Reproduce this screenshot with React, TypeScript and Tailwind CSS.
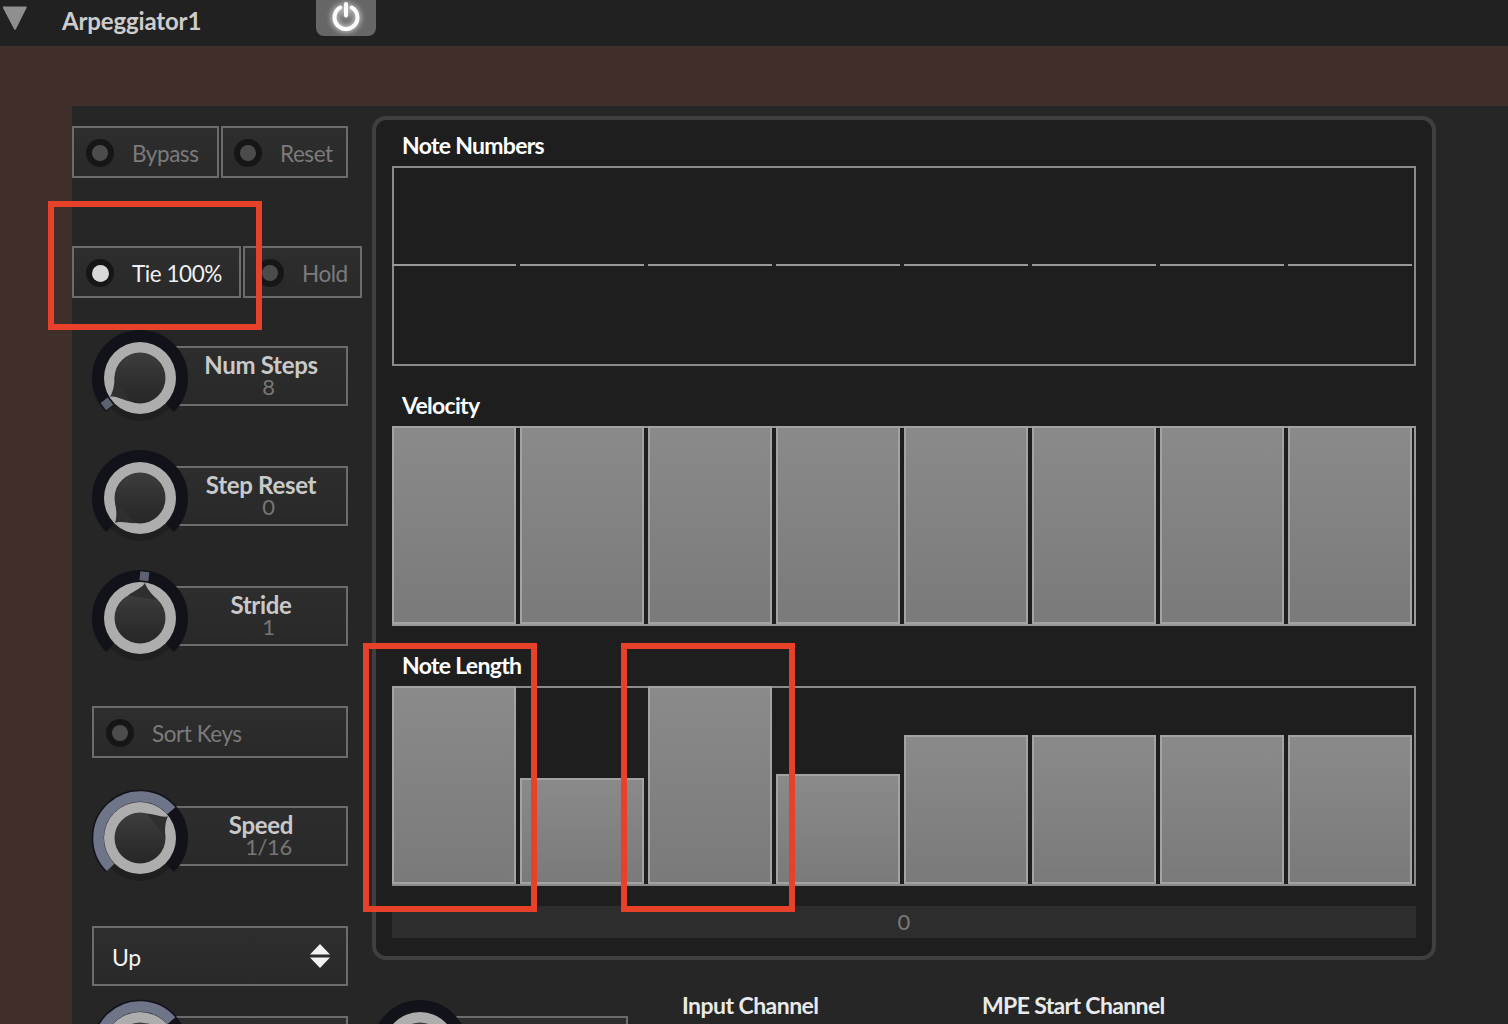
import React from "react";

const pt = (r: number, deg: number) => {
  const a = ((deg - 90) * Math.PI) / 180;
  return [48 + r * Math.cos(a), 48 + r * Math.sin(a)];
};

const arc = (r: number, from: number, to: number) => {
  const [x1, y1] = pt(r, from);
  const [x2, y2] = pt(r, to);
  return `M${x1} ${y1}A${r} ${r} 0 ${to - from > 180 ? 1 : 0} 1 ${x2} ${y2}`;
};

function Knob({ id, tip, marker, blueTo }: { id: string; tip: number; marker?: number; blueTo?: number }) {
  return (
    <svg width="96" height="96" viewBox="0 0 96 96" className="relative z-10 shrink-0 overflow-visible">
      <defs>
        <linearGradient id={id} x1="0" y1="0" x2="0" y2="1">
          <stop offset="0" stopColor="#3d3d3d" />
          <stop offset="1" stopColor="#262626" />
        </linearGradient>
      </defs>
      <circle cx="48" cy="51" r="40" fill="#1f1f1f" />
      <path d={arc(42, -135, 135)} fill="none" stroke="#12121a" strokeWidth="12" />
      {blueTo !== undefined && (
        <>
          <path d={arc(47.5, -135, blueTo)} fill="none" stroke="#12121a" strokeWidth="1.5" />
          <path d={arc(41.5, -135, blueTo)} fill="none" stroke="#6f7588" strokeWidth="10.5" />
        </>
      )}
      {marker !== undefined && (
        <rect x="43.5" y="1.5" width="9" height="9" fill="#5d6272" transform={`rotate(${marker} 48 48)`} />
      )}
      <circle cx="48" cy="48" r="36" fill="#adadad" />
      <circle cx="48" cy="48" r="25.5" fill={`url(#${id})`} />
      <path
        d="M0 -35.5C-1.5 -30 -9 -27 -15 -20.5L15 -20.5C8 -25 2.5 -30 0 -35.5Z"
        fill="#2f2f2f"
        transform={`translate(48 48) rotate(${tip})`}
      />
    </svg>
  );
}

function Led({ on }: { on?: boolean }) {
  return (
    <span className="flex h-[28px] w-[28px] shrink-0 items-center justify-center rounded-full bg-[#161616]">
      <span className={on ? "h-[17px] w-[17px] rounded-full bg-[#d9d9d9]" : "h-[16px] w-[16px] rounded-full bg-[#4c4c4c]"} />
    </span>
  );
}

function Toggle({ label, on, className }: { label: string; on?: boolean; className: string }) {
  return (
    <div
      className={`flex h-[52px] items-center border-2 border-[#6c6c6c] bg-gradient-to-b from-[#2e2e2e] to-[#292929] pt-[2px] text-[22.5px] tracking-[-0.45px] ${
        on ? "text-[#f0f0f0]" : "text-[#7b7b7b]"
      } ${className}`}
    >
      <Led on={on} />
      <span className="pt-[1px]">{label}</span>
    </div>
  );
}

function KnobRow({
  id,
  title,
  value,
  tip,
  marker,
  blueTo,
}: {
  id: string;
  title?: string;
  value?: string;
  tip: number;
  marker?: number;
  blueTo?: number;
}) {
  return (
    <div className="flex items-start">
      <Knob id={id} tip={tip} marker={marker} blueTo={blueTo} />
      <div className="mt-[16px] -ml-[13px] flex h-[60px] w-[173px] shrink-0 flex-col items-center border-2 border-[#6c6c6c] bg-gradient-to-b from-[#2d2d2d] to-[#292929]">
        {title && (
          <span className="mt-[6px] h-[22px] pr-[1px] text-[24px] leading-[22px] font-bold tracking-[-0.3px] text-[#c9c9c9]">
            {title}
          </span>
        )}
        {value && <span className="mt-[1px] h-[20px] pl-[14px] text-[22px] leading-[20px] tracking-[-0.4px] text-[#767676]">{value}</span>}
      </div>
    </div>
  );
}

function Bar({ h }: { h: number }) {
  return (
    <div
      style={{ height: h }}
      className="w-[124px] border-2 border-[#a3a3a3] bg-gradient-to-b from-[#8a8a8a] to-[#7a7a7a]"
    />
  );
}

function Title({ children, className }: { children: React.ReactNode; className: string }) {
  return (
    <div className={`flex h-[40px] items-center pb-[2px] pl-[10px] text-[23px] font-bold tracking-[-0.7px] text-white ${className}`}>
      {children}
    </div>
  );
}

const velocity = [198, 198, 198, 198, 198, 198, 198, 198];
const lengths = [198, 106, 198, 110, 149, 149, 149, 149];

function Highlight({ className }: { className: string }) {
  return <div className={`pointer-events-none absolute z-20 border-[6px] border-[#e8412a] ${className}`} />;
}

export default function App() {
  return (
    <div className="relative h-[1024px] w-[1508px] overflow-hidden bg-[#3f2e29] font-[Lato,sans-serif]">
      <header className="flex h-[46px] items-start bg-[#212121]">
        <svg width="28" height="26" viewBox="0 0 28 26" className="mt-[6px] ml-[1px] shrink-0">
          <path d="M2 0.5H25Q26 0.5 25.5 2L15 23Q14 25 13 23L2 2Q1.5 0.5 2 0.5Z" fill="#8f8f8f" />
        </svg>
        <div className="ml-[33px] w-[254px] pt-[4px] text-[24px] leading-[34px] font-bold tracking-[-0.15px] text-[#cdcdcd]">
          Arpeggiator1
        </div>
        <button className="flex h-[36px] w-[60px] items-center justify-center rounded-b-[8px] bg-[#666666] pb-[4px]">
          <svg width="30" height="30" viewBox="0 0 30 30" fill="none" stroke="#ffffff" strokeWidth="4" strokeLinecap="round" className="drop-shadow-[0_0_3px_#ffffff]">
            <path d="M9.2 6.5A11.5 11.5 0 1 0 20.8 6.5" />
            <path d="M15 3V14.5" />
          </svg>
        </button>
      </header>

      <main className="mt-[60px] ml-[72px] flex h-[918px] bg-[#262626]">
        <aside className="flex w-[300px] shrink-0 flex-col pt-[20px]">
          <div className="flex gap-[2px]">
            <Toggle label="Bypass" className="w-[147px] gap-[18px] pl-[12px]" />
            <Toggle label="Reset" className="w-[127px] gap-[18px] pl-[11px]" />
          </div>
          <div className="mt-[68px] flex gap-[2px]">
            <Toggle label="Tie 100%" on className="w-[169px] gap-[18px] pl-[12px] tracking-[-0.7px]" />
            <Toggle label="Hold" className="w-[119px] gap-[18px] pl-[11px]" />
          </div>
          <div className="mt-[32px] flex flex-col gap-[24px] pl-[20px]">
            <KnobRow id="k1" title="Num Steps" value="8" tip={-122} marker={-128} />
            <KnobRow id="k2" title="Step Reset" value="0" tip={-135} />
            <KnobRow id="k3" title="Stride" value="1" tip={8} marker={6} />
          </div>
          <div className="mt-[40px] pl-[20px]">
            <Toggle label="Sort Keys" className="w-[256px] gap-[18px] pl-[12px]" />
          </div>
          <div className="mt-[32px] pl-[20px]">
            <KnobRow id="k4" title="Speed" value="1/16" tip={52} blueTo={49} />
          </div>
          <div className="mt-[40px] pl-[20px]">
            <div className="flex h-[60px] w-[256px] items-center justify-between border-2 border-[#6c6c6c] bg-gradient-to-b from-[#2e2e2e] to-[#292929] pr-[16px] pl-[18px] text-[23px] tracking-[-0.4px] text-[#f2f2f2]">
              <span className="pt-[2px]">Up</span>
              <svg width="20" height="24" viewBox="0 0 20 24" fill="#f2f2f2">
                <path d="M10 0L20 10.5H0Z" />
                <path d="M0 13.5H20L10 24Z" />
              </svg>
            </div>
          </div>
          <div className="mt-[14px] pl-[20px]">
            <KnobRow id="k5" tip={52} blueTo={49} />
          </div>
        </aside>

        <section className="flex min-w-0 flex-col">
          <div className="mt-[10px] h-[844px] w-[1064px] shrink-0 rounded-[14px] border-4 border-[#3f3f3f] bg-[#1e1e1e] px-[16px]">
            <Title className="mt-[6px]">Note Numbers</Title>
            <div className="flex h-[200px] gap-[4px] shadow-[inset_0_0_0_2px_#8a8a8a]">
              {velocity.map((_, i) => (
                <div key={i} className="mt-[98px] h-[2px] w-[124px] bg-[#999999]" />
              ))}
            </div>
            <Title className="mt-[20px]">Velocity</Title>
            <div className="flex h-[200px] items-start gap-[4px] shadow-[inset_0_0_0_2px_#9a9a9a]">
              {velocity.map((h, i) => (
                <Bar key={i} h={h} />
              ))}
            </div>
            <Title className="mt-[20px]">Note Length</Title>
            <div className="flex h-[200px] items-start gap-[4px] shadow-[inset_0_0_0_2px_#8a8a8a]">
              {lengths.map((h, i) => (
                <div key={i} className="flex h-[198px] items-end">
                  <Bar h={h} />
                </div>
              ))}
            </div>
            <div className="mt-[20px] flex h-[32px] items-center justify-center bg-[#2d2d2d] pb-[2px] text-[22px] text-[#7a7a7a]">0</div>
          </div>
          <div className="mt-[40px] flex items-start">
            <KnobRow id="k6" tip={-135} />
            <div className="ml-[54px] w-[300px] -translate-y-[1px] text-[23px] leading-[12px] font-bold tracking-[-0.55px] text-[#e9e9e9]">Input Channel</div>
            <div className="-translate-y-[1px] text-[23px] leading-[12px] font-bold tracking-[-0.65px] text-[#e9e9e9]">MPE Start Channel</div>
          </div>
        </section>
      </main>

      <Highlight className="top-[201px] left-[48px] h-[129px] w-[214px]" />
      <Highlight className="top-[643px] left-[363px] h-[269px] w-[174px]" />
      <Highlight className="top-[643px] left-[621px] h-[269px] w-[174px]" />
    </div>
  );
}
